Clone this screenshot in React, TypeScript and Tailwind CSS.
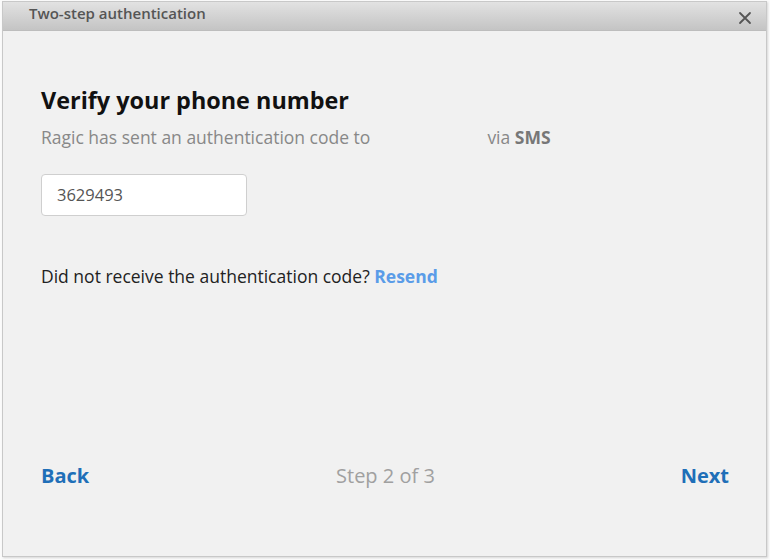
export default function App() {
  const font = { fontFamily: '"Open Sans", "Noto Sans", sans-serif' };
  return (
    <div className="w-[770px] h-[560px] bg-[#fbfbfb] pt-[1px] pl-[2px]" style={font}>
      <div className="w-[765px] h-[556px] flex flex-col border border-[#c8c8c8] bg-[#f1f1f1] shadow-[1px_1px_2px_rgba(0,0,0,0.15)]">
        <div className="h-[29px] flex items-center justify-between pl-[26px] pr-[14px] bg-gradient-to-b from-[#e2e2e2] to-[#c4c4c4] border-b border-[#bdbdbd]">
          <span className="text-[15px] font-semibold text-[#555555] leading-none -mt-[5px]">Two-step authentication</span>
          <svg width="14" height="14" viewBox="0 0 14 14" className="mt-[3px]">
            <path d="M2 2 L12 12 M12 2 L2 12" stroke="#555" strokeWidth="1.8" strokeLinecap="round" />
          </svg>
        </div>
        <div className="flex-1 flex flex-col pl-[38px] pr-[37px]">
          <h1 className="mt-[54px] text-[23.4px] font-bold text-[#111] leading-[30px]">Verify your phone number</h1>
          <p className="mt-[10px] text-[17.5px] text-[#888888] leading-[24px]">
            Ragic has sent an authentication code to
            <span className="inline-block w-[117px]"></span>
            via <span className="font-bold text-[#777]">SMS</span>
          </p>
          <div className="mt-[25px] w-[206px] h-[42px] bg-white border border-[#cfcfcf] rounded-[4px] flex items-center pl-[15px] text-[16.5px] text-[#555]">
            3629493
          </div>
          <p className="mt-[48px] text-[17.5px] text-[#222] leading-[24px]">
            Did not receive the authentication code? <span className="font-bold text-[#5a9ce8]">Resend</span>
          </p>
          <div className="flex-1"></div>
          <div className="flex items-center justify-between mb-[66px] text-[20px] leading-[28px]">
            <span className="font-bold text-[#1f6fb8]">Back</span>
            <span className="text-[#a0a0a0] ml-[1px]">Step 2 of 3</span>
            <span className="font-bold text-[#1f6fb8]">Next</span>
          </div>
        </div>
      </div>
    </div>
  );
}
